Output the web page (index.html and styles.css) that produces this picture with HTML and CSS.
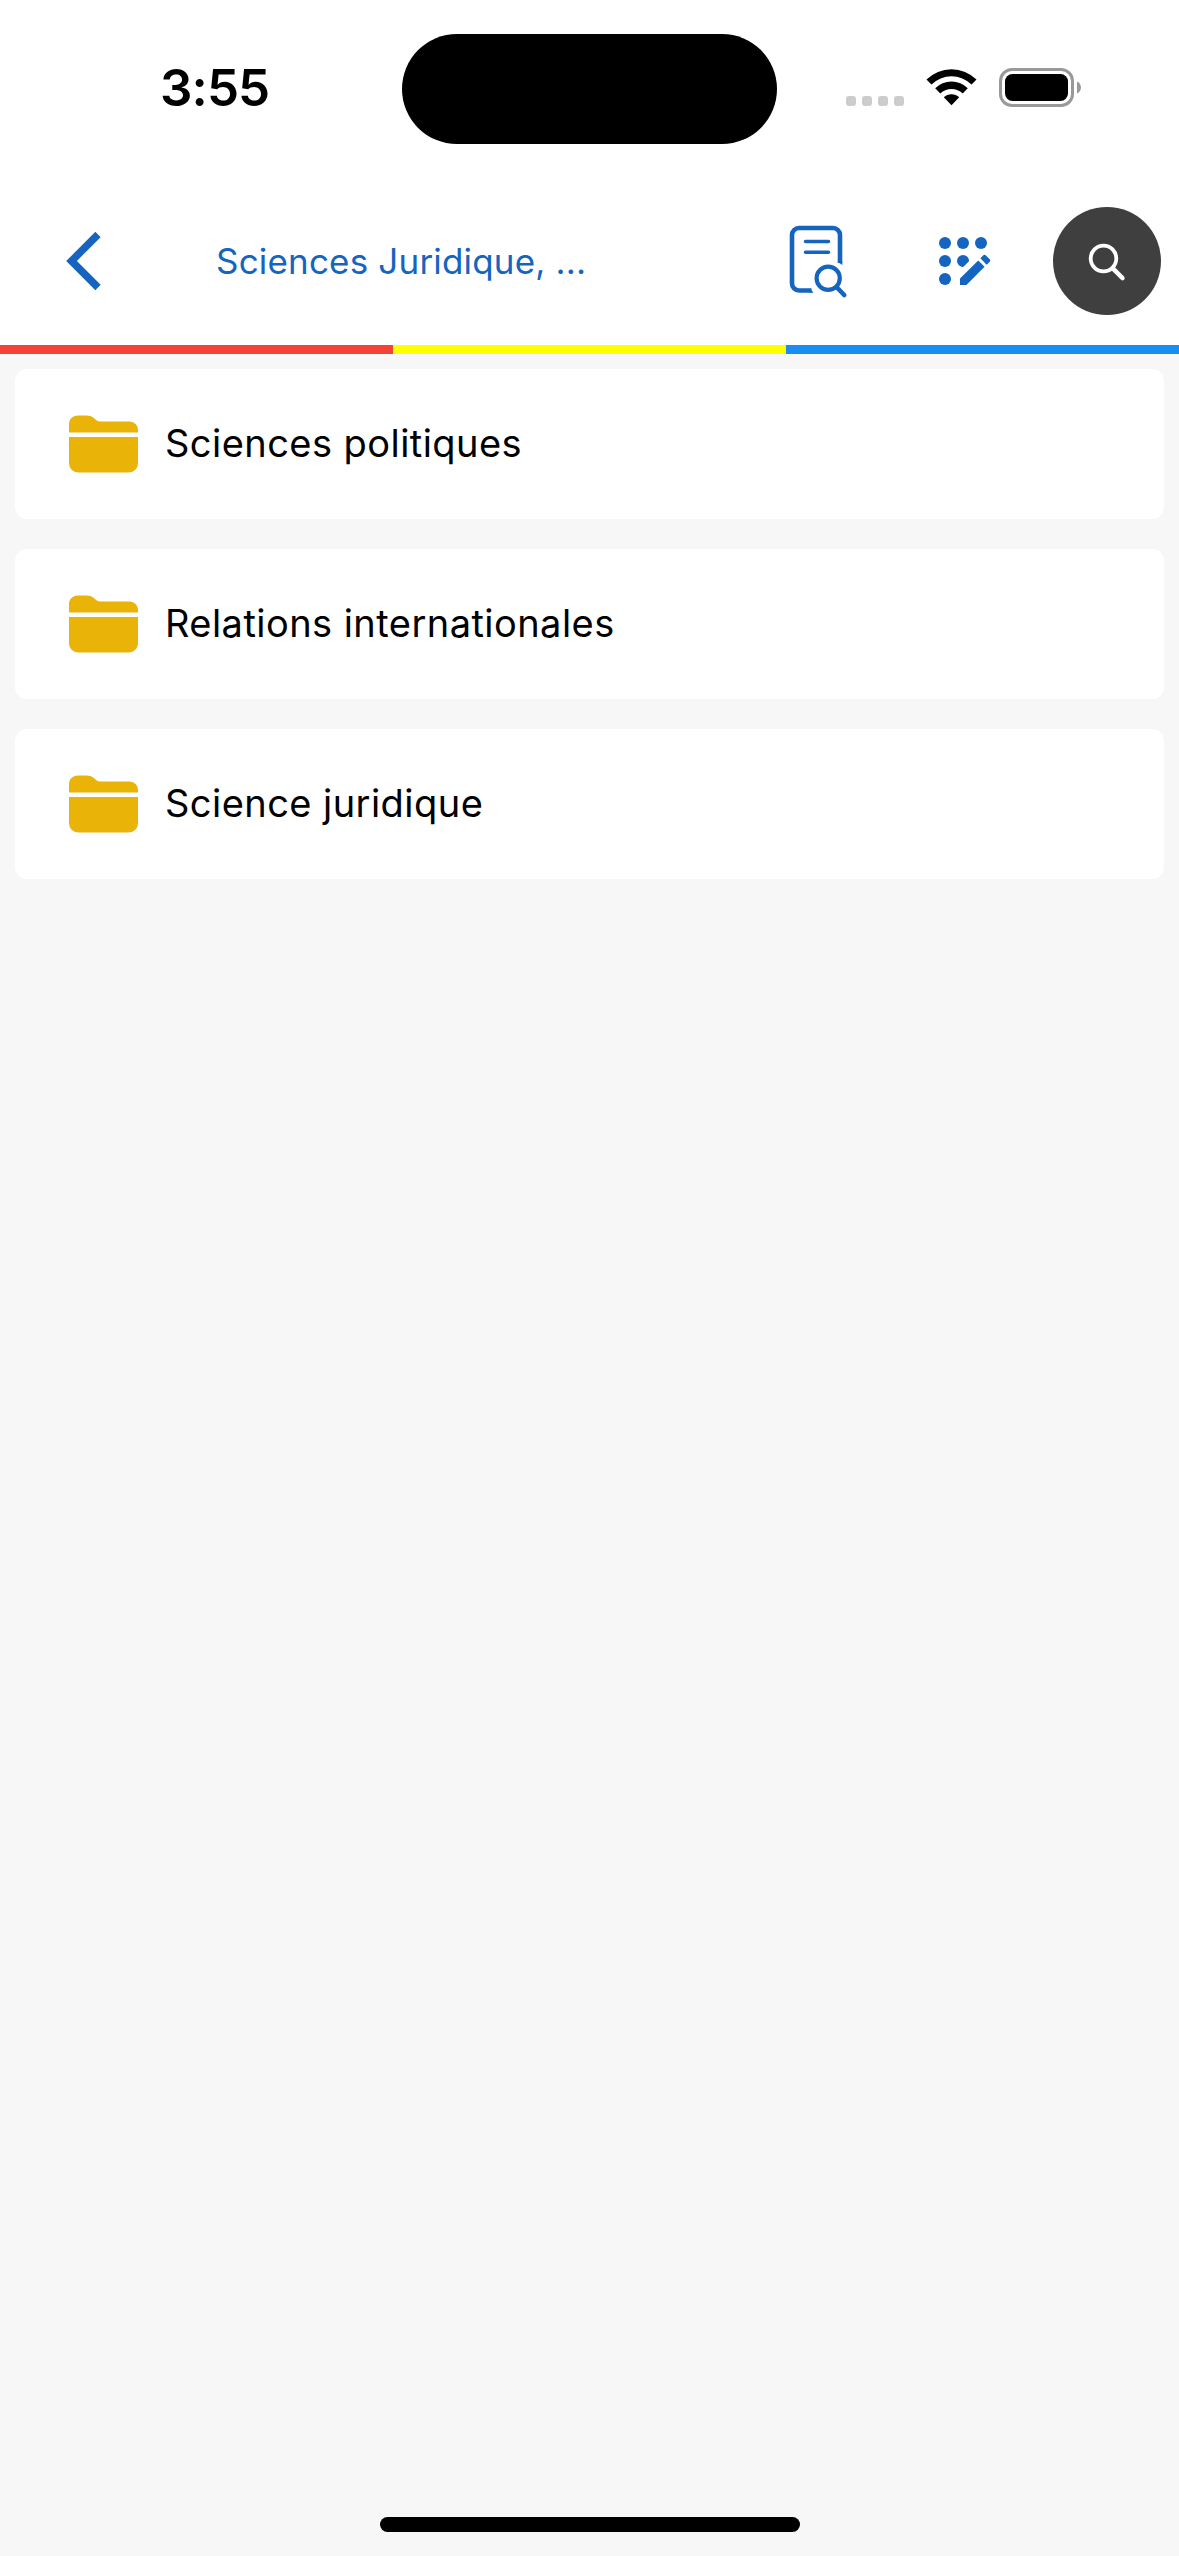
FILE: index.html
```html
<!DOCTYPE html>
<html lang="fr">
  <head>
    <meta charset="UTF-8" />
    <meta name="viewport" content="width=device-width, initial-scale=1.0" />
    <title>Sciences Juridique</title>
    <link rel="stylesheet" href="styles.css">
  </head>
  <body>
    <div class="status-bar">
      <div class="time">3:55</div>
      <div class="island"></div>
      <div class="status-icons">
        <div class="signal">
          <span></span><span></span><span></span><span></span>
        </div>
        <svg class="wifi" width="51" height="38" viewBox="0 0 51 38">
          <path d="M0.5 11.5a35.5 35.5 0 0 1 50 0L45.5 16.500a28.500 28.500 0 0 0-40 0z" />
          <path d="M9.200 20.300a23 23 0 0 1 32.600 0L36.700 25.500a16 16 0 0 0-22.400 0z" />
          <path d="M17.800 29.300a11 11 0 0 1 15.400 0L25.500 37.300z" />
        </svg>
        <svg class="battery" width="83" height="39" viewBox="0 0 83 39">
          <rect x="1.500" y="1.500" width="72" height="36" rx="11.500" fill="none" stroke="#999" stroke-width="3" />
          <rect x="6" y="6" width="63" height="27" rx="7.500" />
          <path d="M78 13.500c5.300 2 5.300 10 0 12z" fill="#999" />
        </svg>
      </div>
    </div>

    <header class="header">
      <button class="back" aria-label="Retour">
        <svg width="36" height="60" viewBox="0 0 36 60">
          <path d="M33 3.500L6.500 30L33 56.500" fill="none" stroke="#1565c0" stroke-width="7.500" />
        </svg>
      </button>
      <h1 class="title">Sciences Juridique, ...</h1>
      <div class="actions">
        <button class="action" aria-label="Document">
          <svg width="72" height="78" viewBox="0 0 72 78" fill="none" stroke="#1565c0" stroke-linecap="round">
            <path d="M32.500 69.500H20a7 7 0 0 1-7-7V14a7 7 0 0 1 7-7h34a7 7 0 0 1 7 7V42" stroke-width="4.600" stroke-linecap="butt" />
            <path d="M58.700 41l4.600 3v-4zM31 67.200l3.500 4.600h-4z" fill="#1565c0" stroke="none" />
            <path d="M26.500 20.500h23M26.500 31.300h23" stroke-width="3.500" />
            <circle cx="49.200" cy="57.300" r="11.600" stroke-width="4.200" />
            <path d="M58 66.500l7.200 7.500" stroke-width="4.600" />
          </svg>
        </button>
        <button class="action" aria-label="Modifier">
          <svg width="72" height="72" viewBox="0 0 24 24" fill="#1565c0">
            <circle cx="6" cy="6" r="2" />
            <circle cx="12" cy="6" r="2" />
            <circle cx="18" cy="6" r="2" />
            <circle cx="6" cy="12" r="2" />
            <circle cx="6" cy="18" r="2" />
            <path d="M14 12.070L12.070 14A2 2 0 1 1 14 12.070z" />
            <path d="M11 20v-2.130l6.070-6.060 2.120 2.120L13.130 20z" />
            <path d="M17.780 11.100l1-1a.54.54 0 0 1 .78 0l1.340 1.340a.54.54 0 0 1 0 .780l-1 1z" />
          </svg>
        </button>
        <button class="search" aria-label="Rechercher">
          <svg width="44" height="44" viewBox="0 0 44 44" fill="none" stroke="#fff" stroke-linecap="round">
            <circle cx="18.500" cy="19.500" r="12.800" stroke-width="3.800" />
            <path d="M27.800 29.300l9.600 9.700" stroke-width="4.600" />
          </svg>
        </button>
      </div>
    </header>

    <div class="stripe">
      <span class="red"></span>
      <span class="yellow"></span>
      <span class="blue"></span>
    </div>

    <main class="list">
      <a class="card">
        <svg class="folder" width="69" height="58" viewBox="0 0 69 58">
          <path d="M0 17.500V9.500C0 4 3.500 0.500 9 0.500h8c4 0 6.500 1 9 3.500 1.500 1.600 3 2.500 5 2.500h29c5.500 0 9 3.500 9 9v2z" />
          <path d="M0 22h69v26.500a9 9 0 0 1-9 9H9a9 9 0 0 1-9-9z" />
        </svg>
        <span>Sciences politiques</span>
      </a>
      <a class="card">
        <svg class="folder" width="69" height="58" viewBox="0 0 69 58">
          <path d="M0 17.500V9.500C0 4 3.500 0.500 9 0.500h8c4 0 6.500 1 9 3.500 1.500 1.600 3 2.500 5 2.500h29c5.500 0 9 3.500 9 9v2z" />
          <path d="M0 22h69v26.500a9 9 0 0 1-9 9H9a9 9 0 0 1-9-9z" />
        </svg>
        <span>Relations internationales</span>
      </a>
      <a class="card">
        <svg class="folder" width="69" height="58" viewBox="0 0 69 58">
          <path d="M0 17.500V9.500C0 4 3.500 0.500 9 0.500h8c4 0 6.500 1 9 3.500 1.500 1.600 3 2.500 5 2.500h29c5.500 0 9 3.500 9 9v2z" />
          <path d="M0 22h69v26.500a9 9 0 0 1-9 9H9a9 9 0 0 1-9-9z" />
        </svg>
        <span>Science juridique</span>
      </a>
    </main>

    <div class="home-indicator"></div>
  </body>
</html>
```

FILE: styles.css
```css
* {
  box-sizing: border-box;
}

body {
  font-family: Inter, "Liberation Sans", sans-serif;
  background-color: #f7f7f7;
  margin: 0;
  color: #000;
  display: flex;
  flex-direction: column;
  height: 100vh;
  overflow: hidden;
}

svg {
  display: block;
}

button {
  display: flex;
  align-items: center;
  justify-content: center;
  padding: 0;
  border: none;
  background: none;
  cursor: pointer;
}

/* Status bar */
.status-bar {
  display: flex;
  align-items: center;
  height: 177px;
  padding: 0 97px 0 160px;
  background-color: #fff;
}

.time {
  width: 242px;
  font-size: 51px;
  font-weight: 600;
  line-height: 60px;
  letter-spacing: -0.9px;
  padding-bottom: 1px;
}

.island {
  width: 375px;
  height: 110px;
  border-radius: 55px;
  background-color: #000;
}

.status-icons {
  display: flex;
  align-items: flex-end;
  margin-left: auto;
  padding-bottom: 2px;
}

.signal {
  display: flex;
  gap: 6px;
  margin: 0 22px 1px 0;
}

.signal span {
  width: 10px;
  height: 10px;
  border-radius: 3px;
  background-color: #ccc;
}

.wifi {
  margin: 0 22px 1px 0;
}

/* Header */
.header {
  display: flex;
  align-items: center;
  height: 168px;
  padding: 0 18px 0 65px;
  background-color: #fff;
}

.title {
  margin: 0 0 0 115px;
  font-size: 35px;
  font-weight: 400;
  line-height: 48px;
  letter-spacing: 0.18px;
  color: #1565c0;
  white-space: nowrap;
}

.actions {
  display: flex;
  align-items: center;
  margin-left: auto;
}

.action {
  margin-right: 54px;
}

.action:first-child {
  margin: 0 76px 2px 0;
}

.search {
  width: 108px;
  height: 108px;
  border-radius: 50%;
  background-color: #3f3f3f;
}

.stripe {
  display: flex;
  height: 9px;
}

.stripe span {
  flex: 1;
}

.red {
  background-color: #f44336;
}

.yellow {
  background-color: #ffff00;
}

.blue {
  background-color: #188ff0;
}

/* Folders */
.list {
  flex: 1;
  display: flex;
  flex-direction: column;
  gap: 30px;
  padding: 15px;
}

.card {
  display: flex;
  align-items: center;
  gap: 27px;
  height: 150px;
  padding: 0 54px 1px;
  border-radius: 12px;
  background-color: #fff;
  font-size: 38px;
  line-height: 51px;
  letter-spacing: 0.45px;
}

.folder {
  fill: #eab308;
}

.home-indicator {
  width: 420px;
  height: 15px;
  margin: 0 auto 24px;
  border-radius: 8px;
  background-color: #000;
}
```
